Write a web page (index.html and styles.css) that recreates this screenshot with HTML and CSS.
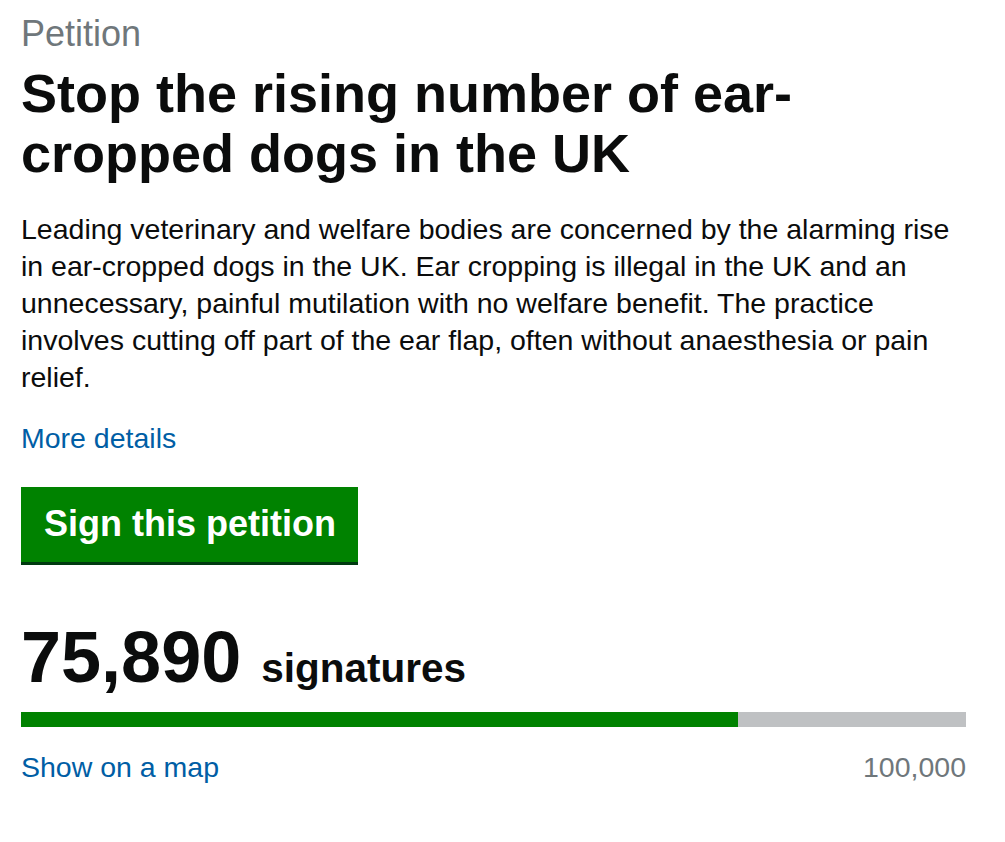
FILE: index.html
```html
<!DOCTYPE html>
<html>
<head>
  <title>Stop the rising number of ear-cropped dogs in the UK - Petitions</title>
  <link rel="stylesheet" href="styles.css">
</head>
<body>
  <main class="petition">
    <span class="petition-caption">Petition</span>
    <h1 class="petition-title">Stop the rising number of ear-cropped dogs in the UK</h1>

    <p class="petition-summary">Leading veterinary and welfare bodies are concerned by the alarming rise in ear-cropped dogs in the UK. Ear cropping is illegal in the UK and an unnecessary, painful mutilation with no welfare benefit. The practice involves cutting off part of the ear flap, often without anaesthesia or pain relief.</p>

    <a class="petition-link" href="#details">More details</a>

    <div class="sign-box">
      <a class="sign-button" href="#sign">Sign this petition</a>
    </div>

    <div class="signature-count">
      <span class="count">75,890</span>
      <span class="count-label">signatures</span>
    </div>

    <div class="progress">
      <div class="progress-fill" style="width: 75.89%"></div>
    </div>

    <div class="progress-footer">
      <a class="petition-link" href="#map">Show on a map</a>
      <span class="threshold">100,000</span>
    </div>
  </main>
</body>
</html>
```

FILE: styles.css
```css
body {
  margin: 0;
  background-color: #fff;
  color: #0b0c0c;
  font-family: "Liberation Sans", Arial, sans-serif;
}

.petition {
  width: 945px;
  margin: 0 0 0 21px;
  padding-top: 14px;
}

.petition-caption {
  display: block;
  font-size: 36px;
  line-height: 40px;
  color: #6f777b;
}

.petition-title {
  margin: 9px 0 0;
  font-size: 54px;
  line-height: 60px;
  font-weight: bold;
}

.petition-summary {
  margin: 28px 0 0;
  font-size: 28.5px;
  line-height: 37px;
}

.petition-link {
  display: inline-block;
  font-size: 28.5px;
  line-height: 37px;
  color: #005ea5;
  text-decoration: none;
}

.petition-summary + .petition-link {
  margin-top: 24px;
}

.sign-box {
  margin-top: 30px;
}

.sign-button {
  display: inline-block;
  padding: 19px 22px 20px 23px;
  background-color: #008200;
  box-shadow: 0 3px 0 #003a10;
  color: #fff;
  font-size: 36px;
  line-height: 36px;
  font-weight: bold;
  text-decoration: none;
}

.signature-count {
  margin-top: 55px;
  font-size: 72px;
  font-weight: bold;
  line-height: 80px;
}

.count-label {
  font-size: 40.5px;
  line-height: 40px;
}

.progress {
  margin-top: 15px;
  height: 15px;
  background-color: #bfc1c3;
}

.progress-fill {
  height: 100%;
  background-color: #008200;
}

.progress-footer {
  display: flex;
  justify-content: space-between;
  align-items: baseline;
  margin-top: 22px;
}

.threshold {
  font-size: 28.5px;
  line-height: 37px;
  color: #6f777b;
}
```
